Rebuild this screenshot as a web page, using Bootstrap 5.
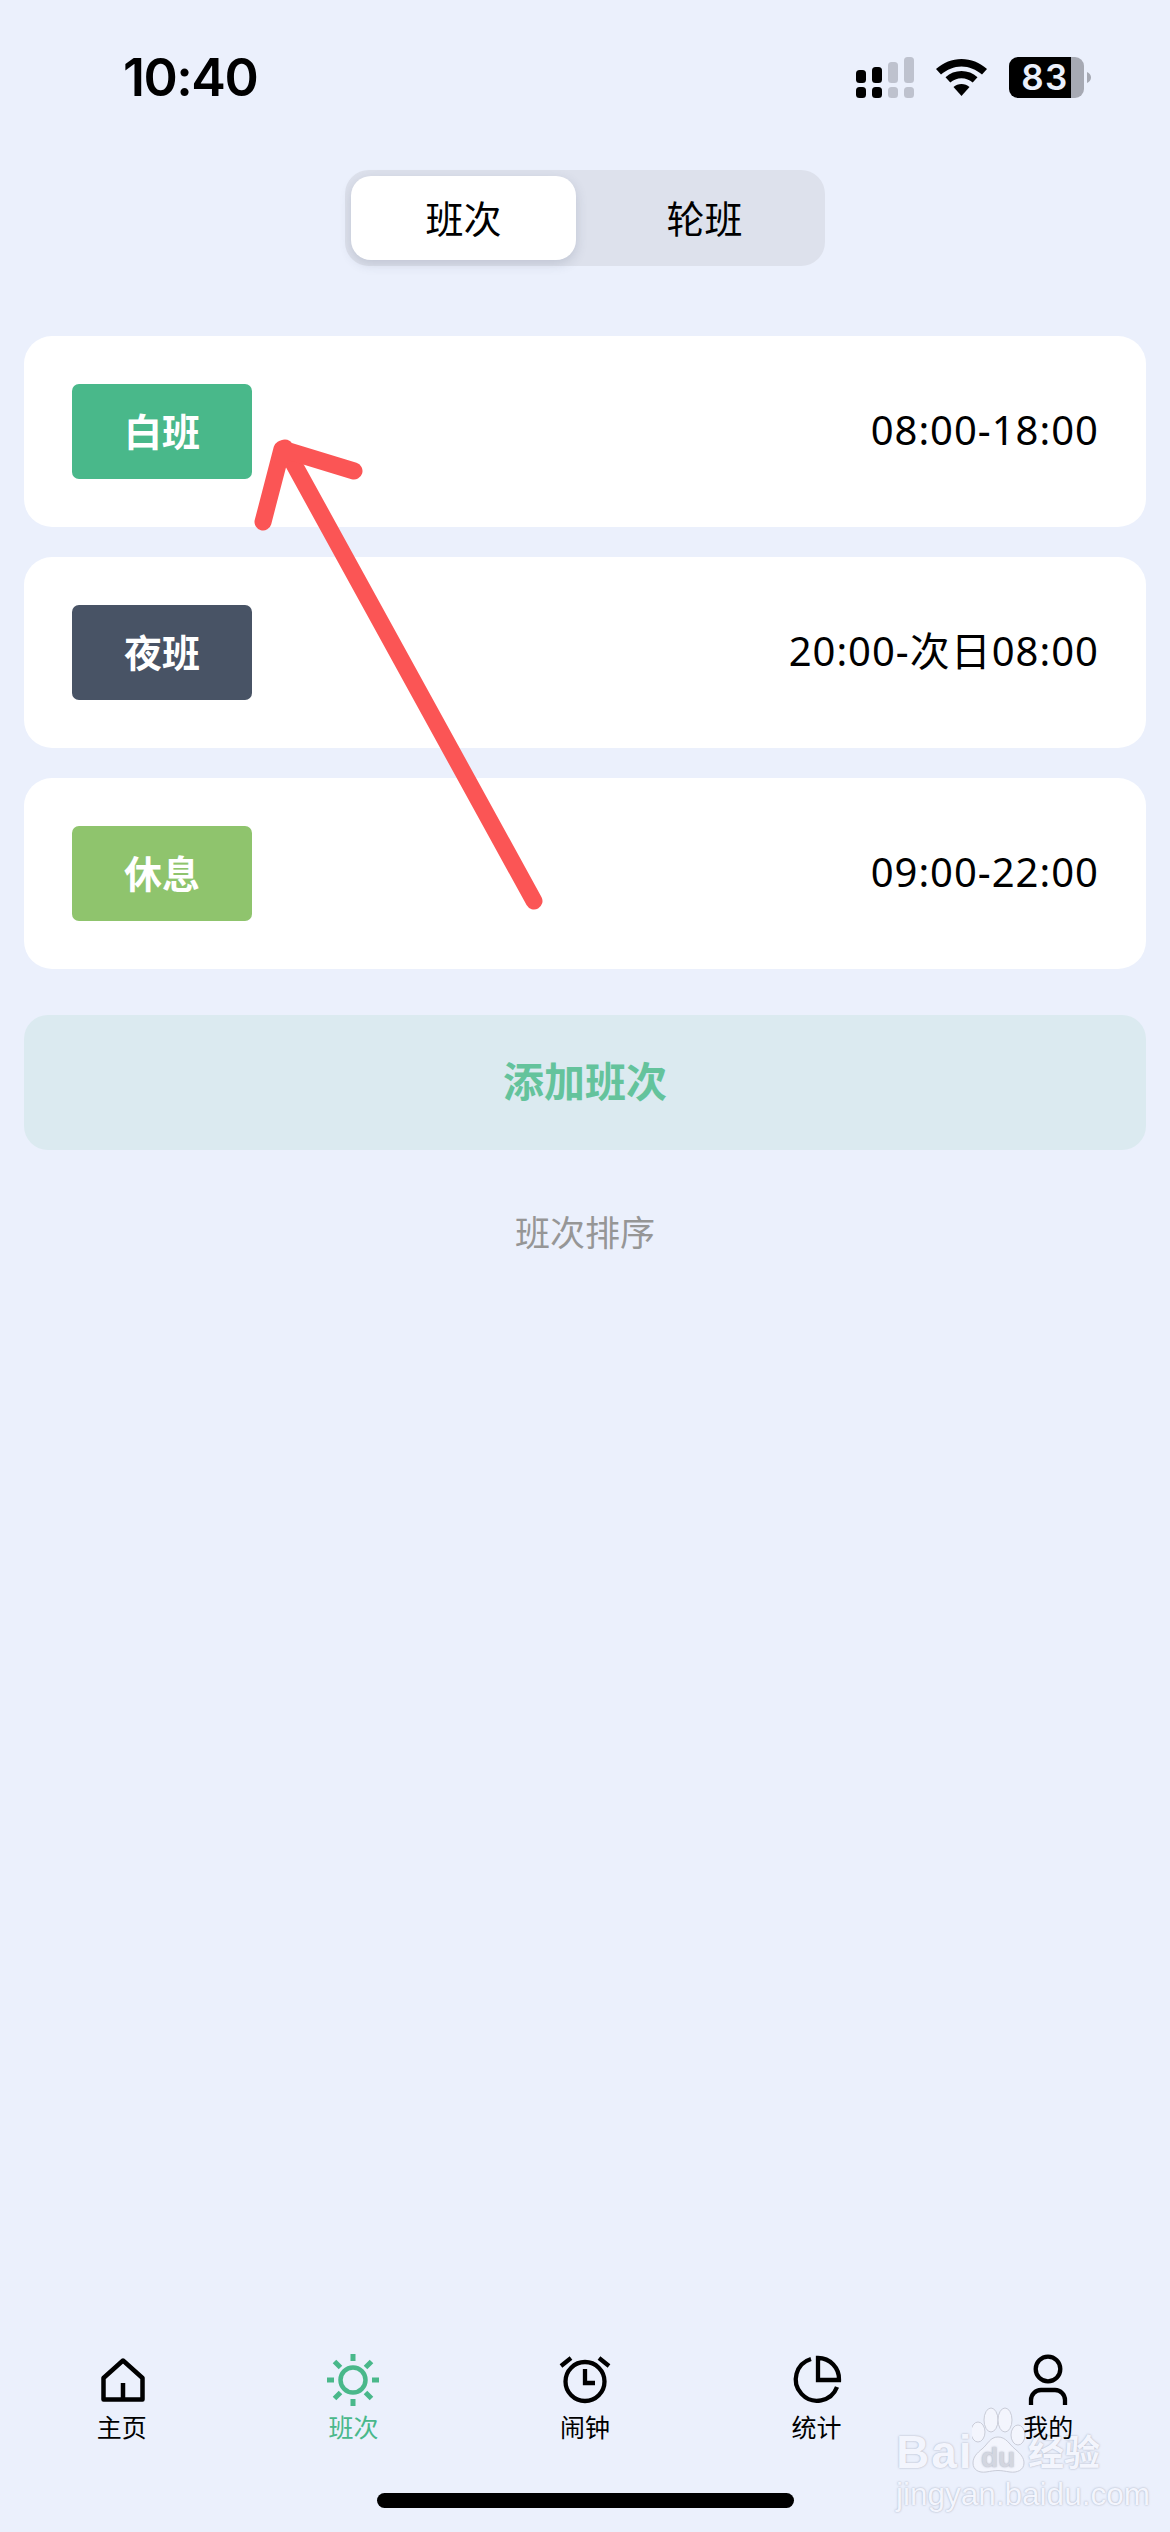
<!DOCTYPE html>
<html lang="zh">
<head>
    <meta charset="UTF-8">
    <meta name="viewport" content="width=device-width, initial-scale=1.0">
    <title>班次</title>
    <link href="https://cdn.jsdelivr.net/npm/bootstrap@5.3.0/dist/css/bootstrap.min.css" rel="stylesheet">
    <style>
        html, body { height: 100%; }
        body {
            background: #ebf0fc;
            color: #000;
            font-family: "Noto Sans", "Noto Sans CJK SC", sans-serif;
        }
        .phone { width: 1170px; height: 2532px; position: relative; overflow: hidden; }

        .status-row { height: 170px; padding: 57px 79px 0 123px; align-items: flex-start; }
        .clock-time { font-family: "Inter", sans-serif; font-size: 52px; font-weight: 600; line-height: 41px; letter-spacing: -1.5px; }
        .status-icons { gap: 22px; height: 41px; }

        .seg-box { width: 480px; height: 96px; margin: 0 auto; padding: 6px; background: #dde1ec; border-radius: 24px; }
        .seg-on, .seg-off { height: 84px; font-size: 38px; line-height: 85px; text-align: center; }
        .seg-on { width: 225px; background: #fff; border-radius: 20px; box-shadow: 0 4px 12px rgba(60, 70, 100, .18); }
        .seg-off { flex: 1; padding-left: 14px; }

        .shift-list { margin: 70px 24px 0; gap: 30px; }
        .shift-row { height: 191px; padding: 0 47px 0 48px; background: #fff; border-radius: 28px; }
        .shift-tag { width: 180px; height: 95px; border-radius: 7px; color: #fff; font-size: 38px; font-weight: 700; line-height: 95px; text-align: center; }
        .tag-day { background: #49b88a; }
        .tag-night { background: #485365; }
        .tag-rest { background: #8fc46d; }
        .shift-time { font-size: 40px; letter-spacing: 1px; margin-top: -3px; }

        .add-btn { display: block; width: 1122px; height: 135px; margin: 46px 24px 0; padding-bottom: 3px; background: #dbeaf0; border: 0; border-radius: 24px; color: #64c39c; font-size: 41px; font-weight: 700; }
        .sort-link { margin-top: 57px; color: #969696; font-size: 35px; line-height: 52px; text-align: center; }

        .tab-bar { position: absolute; left: 6px; right: 6px; top: 2350px; }
        .tab-item { flex: 1; height: 96px; font-size: 25px; line-height: 30px; text-align: center; }
        .tab-icon { display: block; margin: 0 auto 2px; }
        .tab-on { color: #49b88a; }
        .home-bar { position: absolute; left: 377px; top: 2493px; width: 417px; height: 15px; background: #000; border-radius: 8px; }

        .arrow-mark { position: absolute; left: 0; top: 0; pointer-events: none; }

        .wm-box { position: absolute; left: 896px; top: 2405px; width: 212px; color: #f3f5fd; text-shadow: 0 0 2px rgba(130, 135, 155, .7); font-family: "Liberation Sans", "Noto Sans CJK SC", sans-serif; }
        .wm-head { height: 70px; align-items: flex-end; }
        .wm-bai { font-size: 46px; font-weight: 700; line-height: 46px; letter-spacing: 2px; width: 76px; white-space: nowrap; }
        .wm-jy { font-size: 36px; font-weight: 700; line-height: 42px; margin-left: 2px; white-space: nowrap; }
        .wm-url { font-size: 31.500px; line-height: 36px; margin-top: 1px; white-space: nowrap; }
    </style>
</head>
<body>
<div class="phone">
    <div class="status-row d-flex justify-content-between">
        <div class="clock-time">10:40</div>
        <div class="status-icons d-flex">
            <svg width="58" height="41" viewBox="0 0 58 41">
                <rect x="0" y="30" width="10" height="11" rx="3.500"/><rect x="16" y="30" width="10" height="11" rx="3.500"/>
                <rect x="32" y="30" width="10" height="11" rx="3.500" fill="#bec2ce"/><rect x="48" y="30" width="10" height="11" rx="3.500" fill="#bec2ce"/>
                <rect x="0" y="13" width="10" height="13" rx="3.500"/><rect x="16" y="10" width="10" height="16" rx="3.500"/>
                <rect x="32" y="5" width="10" height="21" rx="3.500" fill="#bec2ce"/><rect x="48" y="0" width="10" height="26" rx="3.500" fill="#bec2ce"/>
            </svg>
            <svg width="51" height="41" viewBox="0 0 51 41">
                <path d="M25.500 2C16 2 7.500 5.500 0 12l5 5.500C11 12.500 18 9.500 25.500 9.500S40 12.500 46 17.500L51 12C43.500 5.500 35 2 25.500 2z"/>
                <path d="M25.500 14c-6 0-11.500 2.200-16 6.200l4.800 5.300c3-2.700 7-4.300 11.200-4.300s8.200 1.600 11.200 4.300l4.800-5.300C37 16.200 31.500 14 25.500 14z"/>
                <path d="M25.500 27c-3 0-5.800 1.100-8 3l8 9 8-9c-2.200-1.900-5-3-8-3z"/>
            </svg>
            <svg width="82" height="41" viewBox="0 0 82 41">
                <path d="M62 0h4a9 9 0 0 1 9 9v23a9 9 0 0 1-9 9h-4z" fill="#a6a9b3"/>
                <path d="M9 0h53v41H9a9 9 0 0 1-9-9V9a9 9 0 0 1 9-9z"/>
                <path d="M78 15c2.500 1 4 3 4 5.500S80.500 25 78 26z" fill="#a6a9b3"/>
                <text x="36" y="33" text-anchor="middle" fill="#ebf0fc" font-family="Inter, sans-serif" font-size="35" font-weight="600" letter-spacing="1.500">83</text>
            </svg>
        </div>
    </div>

    <div class="seg-box d-flex">
        <div class="seg-on">班次</div>
        <div class="seg-off">轮班</div>
    </div>

    <div class="shift-list d-flex flex-column">
        <div class="shift-row d-flex align-items-center justify-content-between">
            <div class="shift-tag tag-day">白班</div>
            <div class="shift-time">08:00-18:00</div>
        </div>
        <div class="shift-row d-flex align-items-center justify-content-between">
            <div class="shift-tag tag-night">夜班</div>
            <div class="shift-time">20:00-次日08:00</div>
        </div>
        <div class="shift-row d-flex align-items-center justify-content-between">
            <div class="shift-tag tag-rest">休息</div>
            <div class="shift-time">09:00-22:00</div>
        </div>
    </div>

    <button class="add-btn" type="button">添加班次</button>
    <div class="sort-link">班次排序</div>

    <!-- baidu watermark sits under the tab labels -->
    <div class="wm-box">
        <div class="wm-head d-flex">
            <div class="wm-bai">Bai</div>
            <svg width="54" height="70" viewBox="0 0 54 70" fill="#f3f5fd" stroke="#c9ccd8" stroke-width="1">
                <ellipse cx="6" cy="27" rx="7" ry="10"/>
                <ellipse cx="19" cy="15" rx="7" ry="12"/>
                <ellipse cx="33" cy="15" rx="7" ry="12"/>
                <ellipse cx="46" cy="30" rx="7" ry="10"/>
                <path d="M26 32c8 0 11 7 17 12 6 5 9 9 9 14 0 7-7 10-14 9-5-.700-8-1.500-12-1.500s-7 .800-12 1.500C7 68 1 65 1 58c0-6 4-10 9-14 6-5 8-12 16-12z"/>
                <text x="26" y="62" text-anchor="middle" fill="#d3d6e0" stroke="none" font-family="Liberation Sans, sans-serif" font-size="28" font-weight="700">du</text>
            </svg>
            <div class="wm-jy">经验</div>
        </div>
        <div class="wm-url">jingyan.baidu.com</div>
    </div>

    <div class="tab-bar d-flex">
        <div class="tab-item">
            <svg class="tab-icon" width="60" height="60" viewBox="0 0 60 60" fill="none" stroke="#000" stroke-width="4.500">
                <path d="M31 10.500 L50.500 28 V49.500 H11.500 V28 Z" stroke-linejoin="round"/>
                <path d="M31 33 V49"/>
            </svg>
            <div>主页</div>
        </div>
        <div class="tab-item tab-on">
            <svg class="tab-icon" width="60" height="60" viewBox="0 0 60 60" fill="none" stroke="#49b88a" stroke-width="5">
                <circle cx="30" cy="30" r="12.500" stroke-width="4.500"/>
                <path d="M30 4v7M30 49v7M4 30h7M49 30h7M11.500 11.500l6 6M42.500 42.500l6 6M11.500 48.500l6-6M42.500 17.500l6-6"/>
            </svg>
            <div>班次</div>
        </div>
        <div class="tab-item">
            <svg class="tab-icon" width="60" height="60" viewBox="0 0 60 60" fill="none" stroke="#000" stroke-width="4.300">
                <circle cx="30" cy="31.500" r="19.500"/>
                <path d="M30 19 V33 H40"/>
                <path d="M6 16 L16 8M54 16 L44 8"/>
            </svg>
            <div>闹钟</div>
        </div>
        <div class="tab-item">
            <svg class="tab-icon" width="60" height="60" viewBox="0 0 60 60" fill="none" stroke="#000" stroke-width="4.300">
                <path d="M24 9 A21.300 21.300 0 1 0 50 37"/>
                <path d="M31 8 A21 21 0 0 1 52 30 H31 Z"/>
            </svg>
            <div>统计</div>
        </div>
        <div class="tab-item">
            <svg class="tab-icon" width="60" height="60" viewBox="0 0 60 60" fill="none" stroke="#000" stroke-width="4.300">
                <circle cx="30" cy="19" r="12.300"/>
                <path d="M13 55 V50 A10 10 0 0 1 23 40 H37 A10 10 0 0 1 47 50 V55"/>
            </svg>
            <div>我的</div>
        </div>
    </div>
    <div class="home-bar"></div>

    <svg class="arrow-mark" width="1170" height="1000" viewBox="0 0 1170 1000" fill="none" stroke="#fb5555" stroke-width="17" stroke-linecap="round" stroke-linejoin="round">
        <path d="M534 901 L285 448"/>
        <path d="M263 522 L282 449 L354 471"/>
    </svg>
</div>
<script src="https://cdn.jsdelivr.net/npm/bootstrap@5.3.0/dist/js/bootstrap.bundle.min.js"></script>
</body>
</html>
